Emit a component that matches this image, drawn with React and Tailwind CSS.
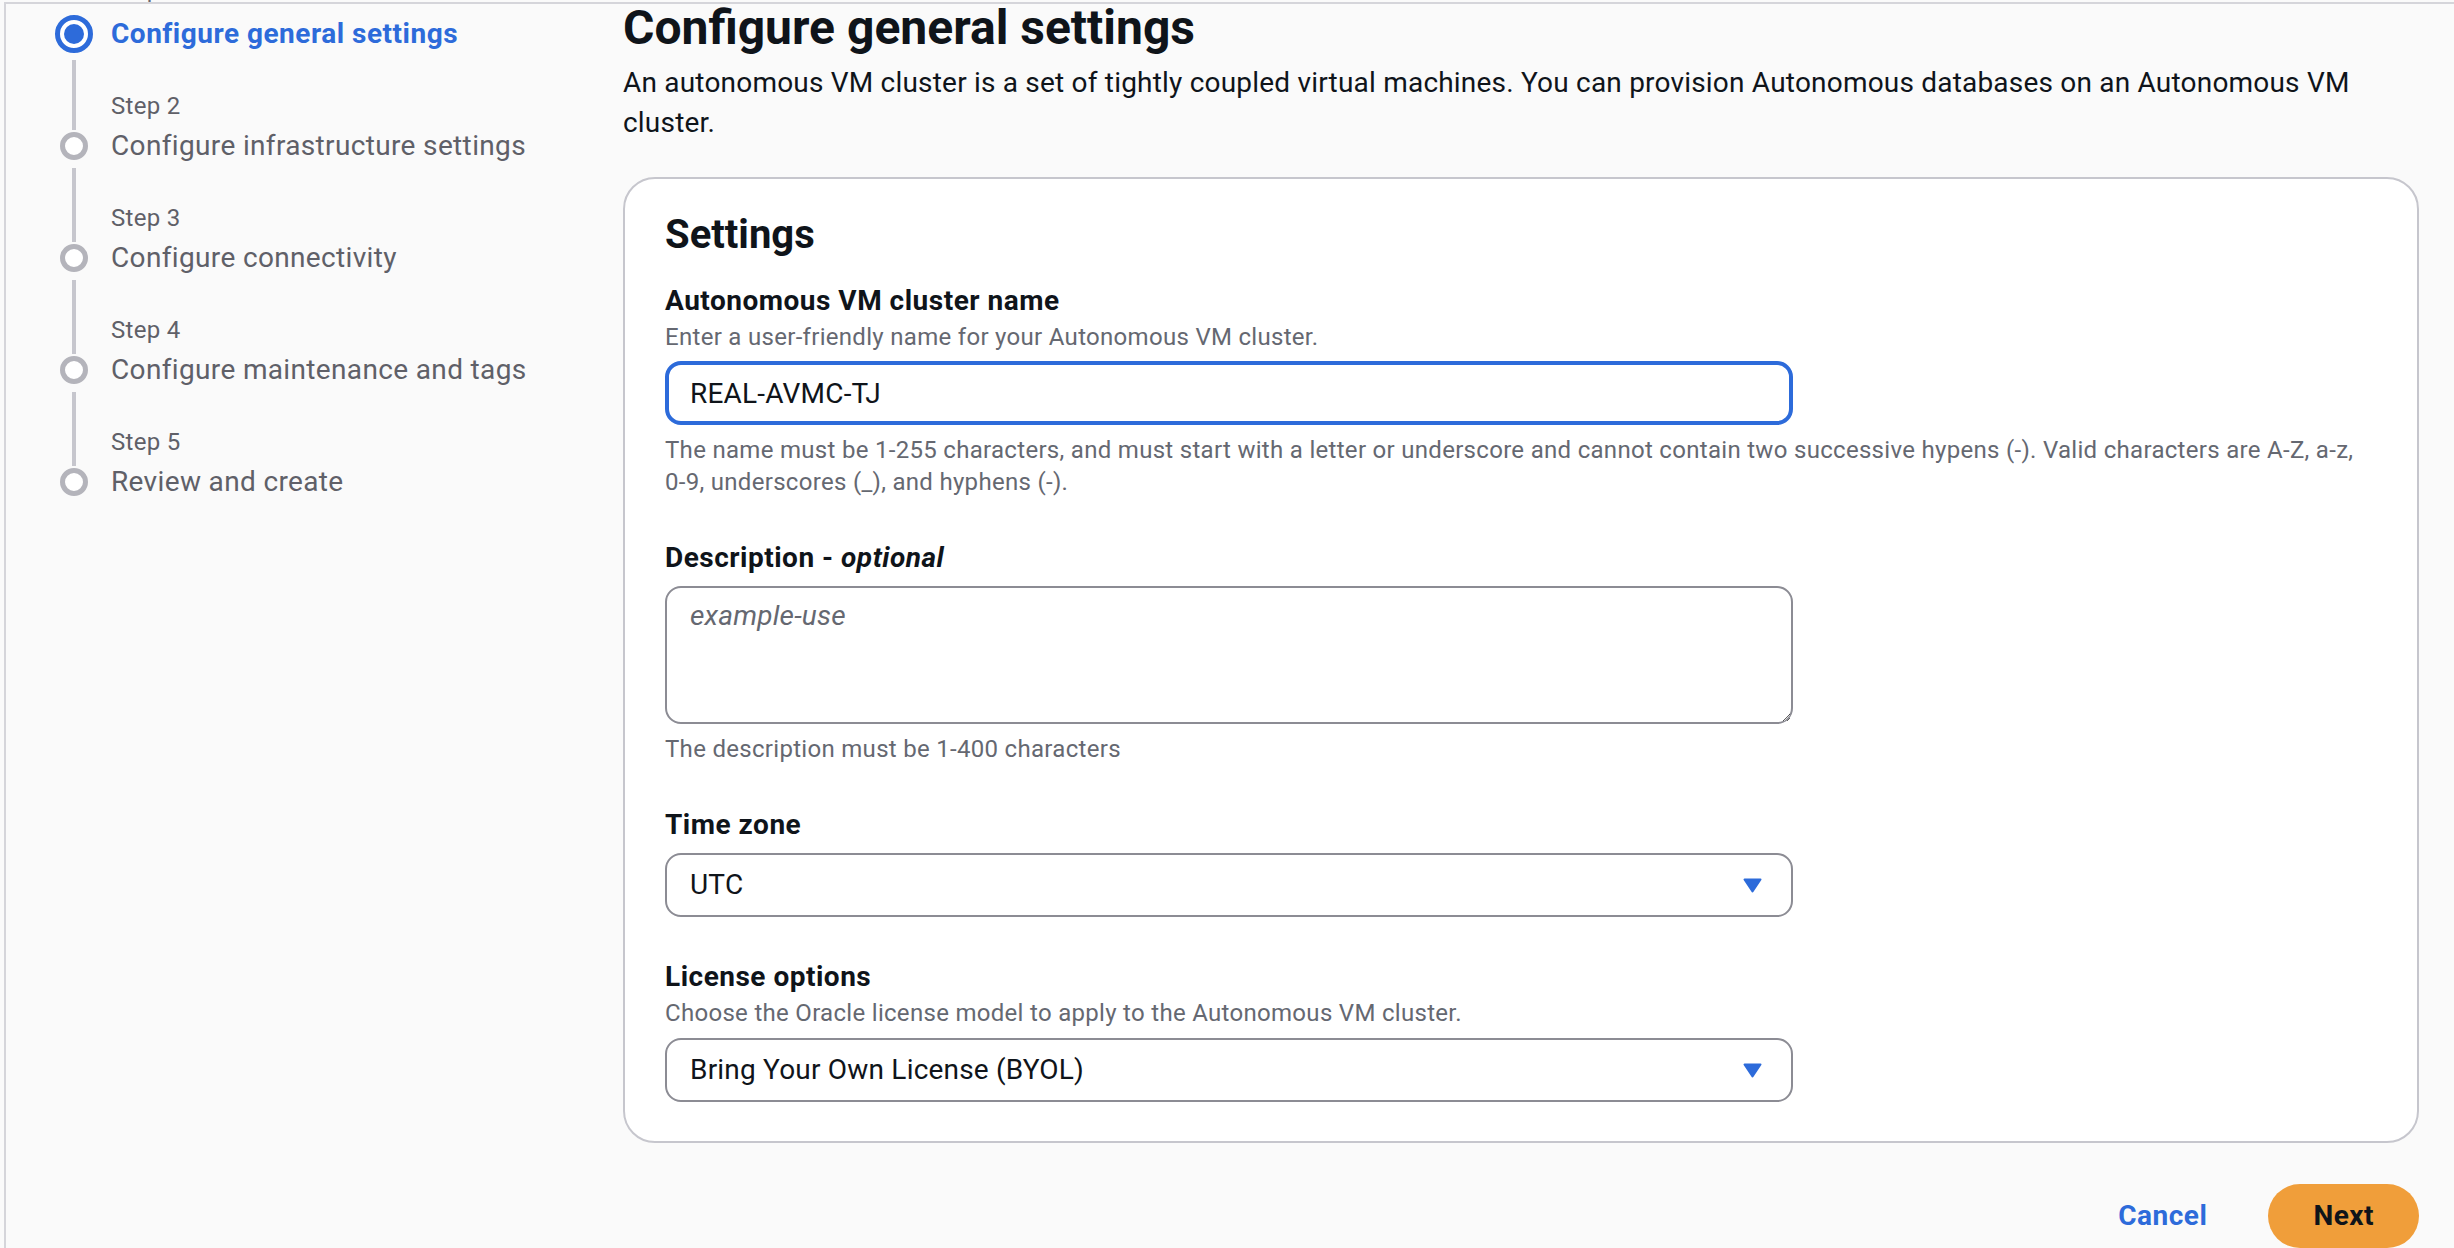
const BLUE = '#2d6bda'

const steps = [
  'Configure general settings',
  'Configure infrastructure settings',
  'Configure connectivity',
  'Configure maintenance and tags',
  'Review and create',
]

function Caret() {
  return (
    <svg width="19" height="15" viewBox="0 0 19 15" className="shrink-0">
      <path d="M1.5 1.5h16L9.5 13.5z" fill={BLUE} stroke={BLUE} strokeWidth="2" strokeLinejoin="round" />
    </svg>
  )
}

function StepCircle({ active }) {
  if (active) {
    return (
      <span className="flex h-[38px] w-[38px] items-center justify-center rounded-full border-[5px] border-[#2d6bda] bg-white">
        <span className="h-[20px] w-[20px] rounded-full bg-[#2d6bda]" />
      </span>
    )
  }
  return <span className="h-[28px] w-[28px] rounded-full border-[5px] border-[#b4b4bb] bg-white" />
}

function Sidebar() {
  return (
    <nav className="w-[617px] shrink-0 pl-[49px]">
      <div className="-mt-[31px] mb-[9px] pl-[56px] text-[24px] leading-[32px] tracking-[0.3px] text-[#656871]">Step 1</div>
      {steps.map((title, i) => (
        <div key={title}>
          <div className="flex h-[40px] items-center">
            <div className="flex w-[38px] justify-center">
              <StepCircle active={i === 0} />
            </div>
            <span
              className={`ml-[18px] whitespace-nowrap text-[28px] leading-[40px] ${
                i === 0 ? 'font-bold tracking-[0.5px] text-[#2d6bda]' : 'tracking-[0.35px] text-[#5f6068]'
              }`}
            >
              {title}
            </span>
          </div>
          {i < steps.length - 1 && (
            <div className="flex h-[72px]">
              <div className="flex w-[38px] justify-center">
                <div className={`w-[4px] bg-[#c6c6cd] ${i === 0 ? 'mt-[6px] h-[70px]' : 'mt-[2px] h-[74px]'}`} />
              </div>
              <div className="ml-[18px] flex flex-col justify-end pb-[4px] text-[24px] leading-[32px] tracking-[0.3px] text-[#5f6068]">
                Step {i + 2}
              </div>
            </div>
          )}
        </div>
      ))}
    </nav>
  )
}

function Label({ children }) {
  return <div className="text-[28px] font-bold leading-[40px] tracking-[0.5px] text-[#0f141a]">{children}</div>
}

function Hint({ children, className = '' }) {
  return <div className={`text-[24px] leading-[32px] tracking-[0.3px] text-[#656871] ${className}`}>{children}</div>
}

function SelectBox({ value }) {
  return (
    <div className="flex h-[64px] w-[1128px] items-center justify-between rounded-[16px] border-2 border-[#8c8c94] bg-white pl-[23px] pr-[29px]">
      <span className="text-[28px] leading-[40px] tracking-[0.2px] text-[#0f141a]">{value}</span>
      <Caret />
    </div>
  )
}

export default function App() {
  return (
    <div className="h-[1248px] w-[2454px] overflow-hidden bg-[#fafafa] pl-[4px] pt-[2px] font-['Roboto','Noto_Sans',sans-serif] text-[#0f141a]">
      <div className="flex h-full border-l-2 border-t-2 border-[#d5d5da]">
        <Sidebar />

        <main className="flex-1 pr-[35px]">
          <h1 className="-mt-[4px] text-[48px] font-bold leading-[56px] text-[#0f141a]">Configure general settings</h1>
          <p className="mt-[7px] text-[28px] leading-[40px] tracking-[0.2px] text-[#0f141a]">
            <span className="whitespace-nowrap">
              An autonomous VM cluster is a set of tightly coupled virtual machines. You can provision Autonomous databases on an Autonomous VM
            </span>
            <br />
            cluster.
          </p>

          {/* Settings container */}
          <section className="mt-[34px] rounded-[32px] border-2 border-[#c6c6cd] bg-white px-[40px] pb-[39px] pt-[32px]">
            <h2 className="text-[40px] font-bold leading-[48px] text-[#0f141a]">Settings</h2>

            <div className="mt-[22px]">
              <Label>Autonomous VM cluster name</Label>
              <Hint>Enter a user-friendly name for your Autonomous VM cluster.</Hint>
              <input
                defaultValue="REAL-AVMC-TJ"
                className="mt-[8px] h-[64px] w-[1128px] rounded-[16px] border-[4px] border-[#2d6bda] bg-white pl-[21px] text-[28px] tracking-[0.2px] text-[#0f141a] outline-none"
              />
              <Hint className="mt-[9px]">
                <span className="whitespace-nowrap">
                  The name must be 1-255 characters, and must start with a letter or underscore and cannot contain two successive hypens (-). Valid characters are A-Z, a-z,
                </span>
                <br />
                0-9, underscores (_), and hyphens (-).
              </Hint>
            </div>

            <div className="mt-[40px]">
              <Label>
                Description - <i>optional</i>
              </Label>
              <textarea
                placeholder="example-use"
                className="mt-[8px] block h-[138px] w-[1128px] resize rounded-[16px] border-2 border-[#8c8c94] bg-white pl-[23px] pt-[8px] text-[28px] leading-[40px] tracking-[0.2px] text-[#0f141a] outline-none placeholder:italic placeholder:text-[#656871]"
              />
              <Hint className="mt-[9px]">The description must be 1-400 characters</Hint>
            </div>

            <div className="mt-[40px]">
              <Label>Time zone</Label>
              <div className="mt-[8px]">
                <SelectBox value="UTC" />
              </div>
            </div>

            <div className="mt-[40px]">
              <Label>License options</Label>
              <Hint>Choose the Oracle license model to apply to the Autonomous VM cluster.</Hint>
              <div className="mt-[9px]">
                <SelectBox value="Bring Your Own License (BYOL)" />
              </div>
            </div>
          </section>

          <div className="mt-[41px] flex items-center justify-end gap-[61px]">
            <button className="text-[28px] font-bold leading-[40px] tracking-[0.5px] text-[#2d6bda]">Cancel</button>
            <button className="h-[64px] rounded-full bg-[#f09e3a] px-[45px] text-[28px] font-bold tracking-[0.5px] text-[#0f141a]">
              Next
            </button>
          </div>
        </main>
      </div>
    </div>
  )
}
